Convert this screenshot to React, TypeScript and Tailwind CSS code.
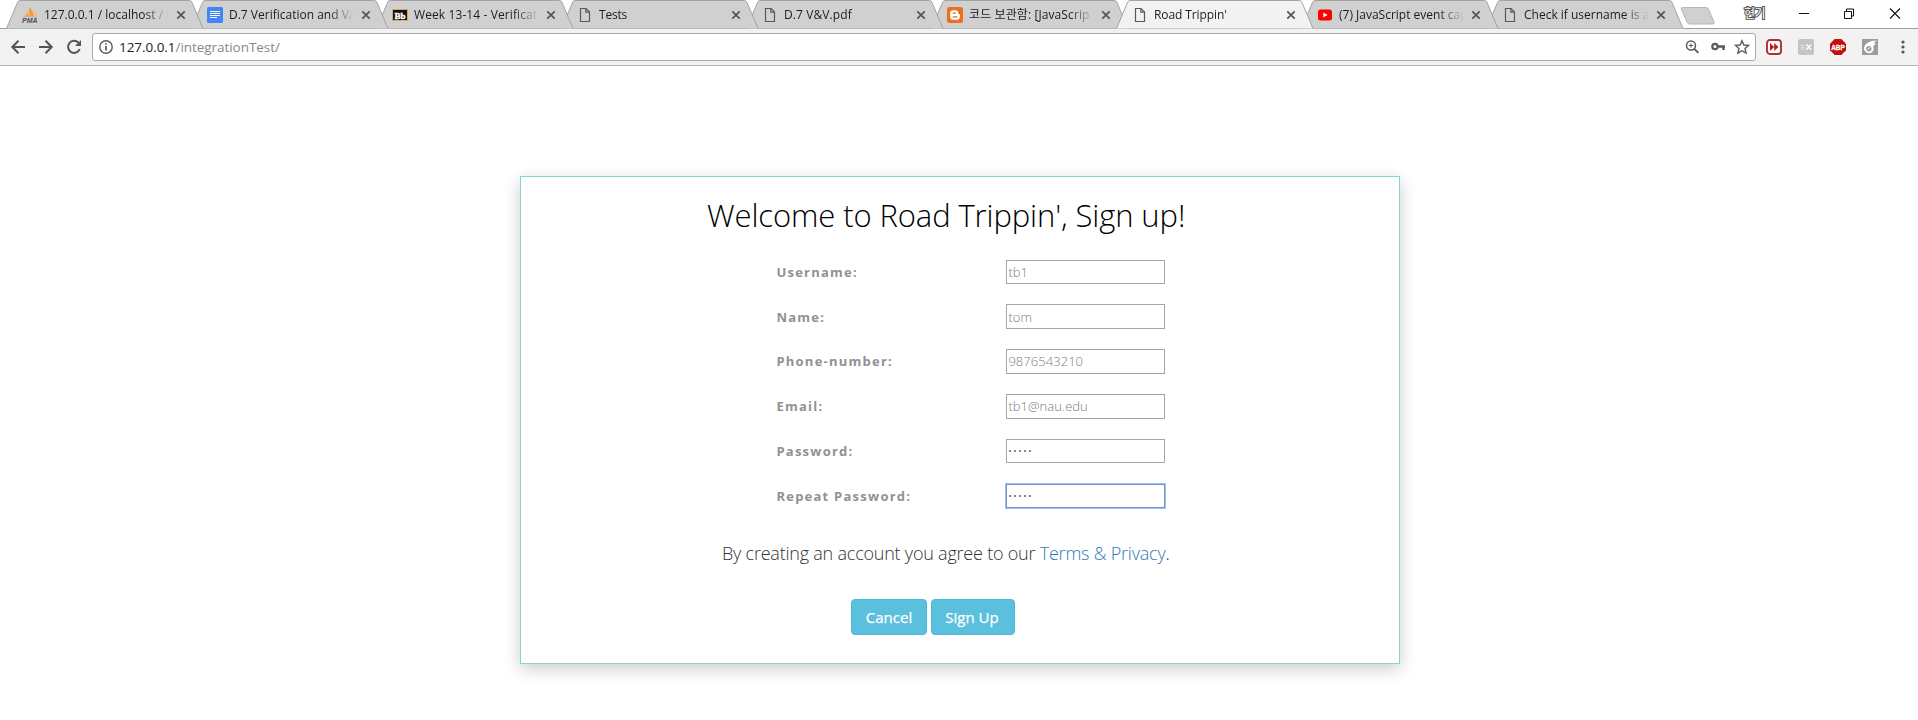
import React from "react";

type Kind = "pma" | "docs" | "bb" | "page" | "blogger" | "youtube";
type TabData = { kind: Kind; title: string; spacing: string; active?: boolean };

const tabs: TabData[] = [
  { kind: "pma", title: "127.0.0.1 / localhost / t", spacing: "tracking-[0px]" },
  { kind: "docs", title: "D.7 Verification and Va", spacing: "tracking-[0px]" },
  { kind: "bb", title: "Week 13-14 - Verificat", spacing: "tracking-[0.1px]" },
  { kind: "page", title: "Tests", spacing: "tracking-[-0.2px]" },
  { kind: "page", title: "D.7 V&V.pdf", spacing: "tracking-[0.1px]" },
  { kind: "blogger", title: "코드 보관함: [JavaScrip", spacing: "tracking-[0.1px]" },
  { kind: "page", title: "Road Trippin'", spacing: "tracking-[-0.1px]", active: true },
  { kind: "youtube", title: "(7) JavaScript event cap", spacing: "tracking-[0px]" },
  { kind: "page", title: "Check if username is a", spacing: "tracking-[0px]" },
];

function Favicon({ kind }: { kind: Kind }) {
  switch (kind) {
    case "pma":
      return (
        <svg className="overflow-visible" width="16" height="16" viewBox="0 0 16 16">
          <path d="M5.500 1.500C6 4 5 7.500 1.500 10L7 9.300z" fill="#f0a85a" />
          <path d="M7 0C10.500 3 11.500 6 11.500 9L7.500 9.200z" fill="#f59a33" />
          <path d="M11.500 3C14 5 15 7.500 15 9.500L12.500 9z" fill="#f7b87a" />
          <path d="M0.500 10.200C5 9 11 9 15.800 10.200L13 10.800C9 10 5 10 0.500 10.200z" fill="#c9a98a" />
          <text x="0" y="15.800" fontSize="6.500" fontWeight="700" fontStyle="italic" textLength="15.500" lengthAdjust="spacingAndGlyphs" fill="#4b4a66" fontFamily="Liberation Sans, sans-serif">PMA</text>
        </svg>
      );
    case "docs":
      return (
        <svg width="16" height="16" viewBox="0 0 16 16">
          <rect width="16" height="16" rx="1.500" fill="#4285f4" />
          <path d="M3 4.500h10M3 6.500h10M3 8.500h10M3 10.500h7" stroke="#fff" strokeWidth="1" />
        </svg>
      );
    case "bb":
      return (
        <svg width="16" height="16" viewBox="0 0 16 16">
          <rect x="0.500" y="2.500" width="15" height="11" fill="#111" stroke="#d9a85c" />
          <text x="2.500" y="11.500" fontSize="9" fontWeight="700" fill="#fff" stroke="#fff" strokeWidth="0.4" textLength="11" lengthAdjust="spacingAndGlyphs" fontFamily="Liberation Serif, serif">Bb</text>
        </svg>
      );
    case "blogger":
      return (
        <svg width="16" height="16" viewBox="0 0 16 16">
          <rect width="16" height="16" rx="2.500" fill="#e8701f" />
          <path d="M6 3.200h2.600c1.500 0 2.600 1.100 2.600 2.500 0 .9.300 1.100 1 1.200.5.100.7.400.7.900v2c0 1.800-1.200 3-3 3H6c-1.800 0-2.900-1.200-2.900-3V6.200c0-1.800 1.100-3 2.900-3z" fill="#fff" />
          <path d="M6.200 6.200h2.200M6.200 9.900h3.600" stroke="#e8701f" strokeWidth="1.300" strokeLinecap="round" />
        </svg>
      );
    case "youtube":
      return (
        <svg width="16" height="16" viewBox="0 0 16 16">
          <rect x="1" y="2.500" width="14" height="11" rx="2.500" fill="#f00" />
          <path d="M6.300 5.500v5L10.500 8z" fill="#fff" />
        </svg>
      );
    default:
      return (
        <svg width="16" height="16" viewBox="0 0 16 16" fill="none" stroke="#5a5a5a" strokeWidth="1.200">
          <path d="M3.500 1.500h5.500l3.500 3.500v9.500h-9z" />
          <path d="M8.800 1.500v3.700h3.700" />
        </svg>
      );
  }
}

function Tab({ tab }: { tab: TabData }) {
  return (
    <div className={"relative h-[29px] w-[185px] shrink-0 " + (tab.active ? "z-10" : "")}>
      <svg className="absolute left-0 top-0 overflow-visible" width="197" height="29" viewBox="0 0 197 29">
        <path
          d="M0.500 28.500L11.500 2.500Q12.300 0.500 14 0.500H183.500Q185.200 0.500 186 2.500L197 28.500z"
          fill={tab.active ? "#f2f2f2" : "#d0d0d0"}
        />
        <path
          d="M0.500 28.500L11.500 2.500Q12.300 0.500 14 0.500H183.500Q185.200 0.500 186 2.500L197 28.500"
          fill="none"
          stroke="#a3a3a3"
        />
      </svg>
      <div className="relative flex h-full items-center pl-4">
        <Favicon kind={tab.kind} />
        <span
          className={
            "ml-[6px] w-[125px] overflow-hidden whitespace-nowrap text-[12px] leading-[18px] text-[#1c1c1c] [mask-image:linear-gradient(to_right,black_80%,transparent_100%)] " +
            tab.spacing
          }
        >
          {tab.title}
        </span>
        <svg className="ml-[7px] mt-[1px] shrink-0" width="10" height="10" viewBox="0 0 10 10">
          <path d="M1.300 1.300l7.400 7.400M8.700 1.300l-7.400 7.400" stroke="#555" strokeWidth="1.700" />
        </svg>
      </div>
    </div>
  );
}

function TabStrip() {
  return (
    <div className="flex h-[29px] border-b border-[#9f9f9f] bg-white pl-[6px]">
      <div className="isolate flex">
        <div className="flex flex-row-reverse">
          {[...tabs].reverse().map((t) => (
            <Tab key={t.title} tab={t} />
          ))}
        </div>
      </div>
      <svg className="ml-[9px] mt-[6px]" width="36" height="19" viewBox="0 0 36 19">
        <path d="M2.500 1.500H26q1.800 0 2.500 1.600l5.500 13q.6 1.900-1.200 1.900H9.500q-1.600 0-2.400-1.700L1.300 3q-.5-1.500 1.200-1.500z" fill="#d0d0d0" stroke="#b5b5b5" />
      </svg>
      <span className="ml-[28px] mt-[5px] w-[24px] text-[12px] leading-[18px] tracking-[-0.5px] text-white [-webkit-text-stroke:2px_#555] [paint-order:stroke_fill]">
        현기
      </span>
      <svg className="ml-[30px] mt-[7px]" width="104" height="13" viewBox="0 0 104 13" fill="none" stroke="#111">
        <path d="M1 6.500h10" />
        <path d="M46.500 4.500h7v7h-7zM48.500 4.500v-2.500h7v7h-2" />
        <path d="M92 1.500l10 10M102 1.500l-10 10" strokeWidth="1.100" />
      </svg>
    </div>
  );
}

function Toolbar() {
  return (
    <div className="flex h-[37px] items-center border-b border-[#b3b3b3] bg-[#f2f2f2]">
      <svg className="ml-[10px]" width="72" height="16" viewBox="0 0 72 16" fill="none" stroke="#555" strokeWidth="2">
        <path d="M15 8H2.500M8.500 1.800L2.300 8l6.200 6.200" />
        <path d="M29 8h12.500M35.500 1.800L41.700 8l-6.200 6.200" />
        <path d="M69.700 10A6 6 0 1 1 68.500 3.800" />
        <path d="M71 1v6h-6z" fill="#555" stroke="none" />
      </svg>
      <div className="ml-[10px] flex h-[28px] w-[1664px] items-center rounded-[3px] border border-[#a9a9a9] bg-white">
        <svg className="ml-[6px]" width="14" height="14" viewBox="0 0 14 14" fill="none" stroke="#5a5a5a">
          <circle cx="7" cy="7" r="6.200" strokeWidth="1.400" />
          <path d="M7 6v4.500M7 3.300v1.500" strokeWidth="1.700" />
        </svg>
        <span className="ml-[6px] flex-1 text-[13.500px] leading-[20px] tracking-[-0.05px] text-[#222]">
          127.0.0.1<span className="text-[#888]">/integrationTest/</span>
        </span>
        <svg className="mr-[5px]" width="66" height="16" viewBox="0 0 66 16" fill="none" stroke="#5a5a5a">
          <circle cx="7" cy="6.500" r="4.500" strokeWidth="1.500" />
          <path d="M10.300 9.800l4 4" strokeWidth="1.900" />
          <path d="M4.800 6.500h4.400M7 4.300v4.400" strokeWidth="1" />
          <circle cx="31" cy="7.500" r="2.700" strokeWidth="2.200" />
          <path d="M34 7.500h7M39.500 7.500v3.500" strokeWidth="2.400" />
          <path d="M58 1.700l1.900 4.300 4.600.4-3.500 3.100 1.100 4.600L58 11.700l-4.100 2.400L55 9.500 51.500 6.400l4.600-.4z" strokeWidth="1.400" />
        </svg>
      </div>
      <svg className="ml-[10px]" width="16" height="16" viewBox="0 0 16 16">
        <rect x="1" y="1" width="14" height="14" rx="3" fill="#fff" stroke="#b03030" strokeWidth="1.900" />
        <path d="M4 4v8l4.200-4zM8.200 4v8l4.200-4z" fill="#b32020" />
      </svg>
      <svg className="ml-[16px]" width="16" height="16" viewBox="0 0 16 16">
        <rect width="16" height="16" rx="2.500" fill="#c4c4c4" />
        <text x="2.500" y="11" fontSize="8" fontWeight="700" fill="#dcdcdc" textLength="5" lengthAdjust="spacingAndGlyphs" fontFamily="Liberation Sans, sans-serif">E</text>
        <path d="M8.500 5.500l4.500 5M13 5.500l-4.500 5" stroke="#fff" strokeWidth="1.500" />
      </svg>
      <svg className="ml-[16px]" width="16" height="16" viewBox="0 0 16 16">
        <path d="M4.700 0h6.600L16 4.700v6.600L11.300 16H4.700L0 11.300V4.700z" fill="#c40d0d" />
        <text x="1.200" y="10.700" fontSize="7.500" fontWeight="700" fill="#fff" stroke="#fff" strokeWidth="0.300" textLength="13.600" lengthAdjust="spacingAndGlyphs" fontFamily="Liberation Sans, sans-serif">ABP</text>
      </svg>
      <svg className="ml-[16px]" width="16" height="16" viewBox="0 0 16 16">
        <rect width="16" height="16" fill="#9c9c9c" />
        <path d="M2 9C2.500 4.500 8 1.500 14.500 1.500L11.500 4.200L14 4.500L11 7.500L11.800 9.500A4.800 4.800 0 1 1 2 9z" fill="#fff" />
        <circle cx="6.800" cy="9.700" r="2.700" fill="#9c9c9c" />
        <path d="M5.200 10.800L8.200 8.200" stroke="#fff" strokeWidth="1" />
      </svg>
      <svg className="ml-[22.5px]" width="4" height="14" viewBox="0 0 4 14" fill="#555">
        <circle cx="2" cy="2" r="1.600" />
        <circle cx="2" cy="7" r="1.600" />
        <circle cx="2" cy="12" r="1.600" />
      </svg>
    </div>
  );
}

const fields = [
  { label: "Username:", value: "tb1" },
  { label: "Name:", value: "tom" },
  { label: "Phone-number:", value: "9876543210" },
  { label: "Email:", value: "tb1@nau.edu" },
  { label: "Password:", dots: true },
  { label: "Repeat Password:", dots: true, focus: true },
];

function Field({ label, value, dots, focus }: { label: string; value?: string; dots?: boolean; focus?: boolean }) {
  return (
    <div className="flex h-[24.6px] items-center">
      <span className="w-[230px] text-[13px] font-bold leading-[18px] tracking-[1.24px] text-[#919191]">{label}</span>
      <div
        className={
          "flex h-[24.6px] w-[159px] items-center border bg-white pl-[1px] text-[13px] font-light leading-[18px] tracking-[0.05px] text-[#7c7c7c] " +
          (focus ? "border-[#6f93cf] shadow-[0_0_0_1px_#a9c0e8]" : "border-[#a6a6a6]")
        }
      >
        {dots ? (
          <span className="flex gap-[3px] pl-px">
            {[0, 1, 2, 3, 4].map((i) => (
              <span key={i} className="size-[2px] bg-[#858585]" />
            ))}
          </span>
        ) : (
          value
        )}
      </div>
    </div>
  );
}

export default function App() {
  return (
    <div className="flex h-[720px] w-[1918px] flex-col overflow-hidden bg-white font-['Open_Sans','Noto_Sans_CJK_KR',sans-serif]">
      <TabStrip />
      <Toolbar />
      <main className="pl-[520px] pt-[110px]">
        <section className="flex h-[488px] w-[880px] flex-col border border-[#84d6d3] bg-white shadow-[0_5px_16px_0_rgba(0,0,0,0.2)]">
          <h1 className="ml-[186px] mt-[17px] whitespace-nowrap text-[31px] font-light leading-[42px] tracking-[-0.11px] text-black">
            Welcome to Road Trippin', Sign up!
          </h1>
          <form className="ml-[255.4px] mt-[23.6px] flex flex-col gap-[20.2px]">
            {fields.map((f) => (
              <Field key={f.label} {...f} />
            ))}
          </form>
          <p className="ml-[201px] mt-[32px] whitespace-nowrap text-[18px] font-light leading-[26px] tracking-[-0.22px] text-[#333]">
            By creating an account you agree to our <a className="text-[#337ab7]">Terms &amp; Privacy</a>.
          </p>
          <div className="ml-[330px] mt-[33px] flex gap-[4px]">
            <button className="h-[36px] w-[76px] rounded-[4px] border border-[#4fb6d3] bg-[#5bc0de] text-[15px] leading-[20px] text-white [-webkit-text-stroke:0.25px_white]">Cancel</button>
            <button className="h-[36px] w-[84px] rounded-[4px] border border-[#4fb6d3] bg-[#5bc0de] pr-[2px] text-[15px] leading-[20px] text-white [-webkit-text-stroke:0.25px_white]">Sign Up</button>
          </div>
        </section>
      </main>
    </div>
  );
}
